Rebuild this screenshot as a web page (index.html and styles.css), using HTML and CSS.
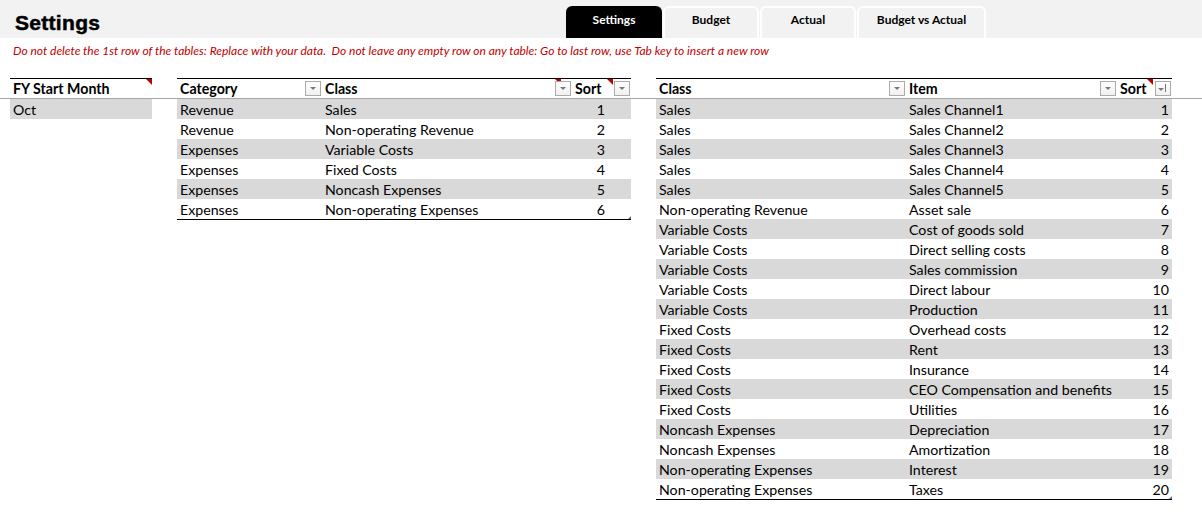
FILE: index.html
```html
<!DOCTYPE html>
<html lang="en">
<head>
  <meta charset="UTF-8" />
  <title>Settings</title>
  <link rel="stylesheet" href="styles.css">
</head>
<body>
  <header class="topbar">
    <h1 class="title">Settings</h1>
    <nav class="tabs">
      <a class="tab active" href="#">Settings</a>
      <a class="tab" href="#">Budget</a>
      <a class="tab" href="#">Actual</a>
      <a class="tab wide" href="#">Budget vs Actual</a>
    </nav>
  </header>

  <p class="note">Do not delete the 1st row of the tables: Replace with your data.&nbsp; Do not leave any empty row on any table: Go to last row, use Tab key to insert a new row</p>

  <main class="sheets">
    <table class="tbl t-fy">
      <colgroup><col style="width:142px"></colgroup>
      <thead>
        <tr><th>FY Start Month<span class="flag"></span></th></tr>
      </thead>
      <tbody>
        <tr><td>Oct</td></tr>
      </tbody>
    </table>

    <table class="tbl t-cat">
      <colgroup><col style="width:145px"><col style="width:250px"><col style="width:59px"></colgroup>
      <thead>
        <tr>
          <th>Category<span class="drop"></span></th>
          <th>Class<span class="flag f-class"></span><span class="drop"></span></th>
          <th>Sort<span class="flag f-sort"></span><span class="drop"></span></th>
        </tr>
      </thead>
      <tbody id="cat-rows"></tbody>
    </table>

    <table class="tbl t-item">
      <colgroup><col style="width:250px"><col style="width:211px"><col style="width:55px"></colgroup>
      <thead>
        <tr>
          <th>Class<span class="drop"></span></th>
          <th>Item<span class="drop"></span></th>
          <th>Sort<span class="flag f-sort2"></span><span class="drop sorted"></span></th>
        </tr>
      </thead>
      <tbody id="item-rows"></tbody>
    </table>
  </main>

  <script>
    const categories = [
      ["Revenue", "Sales"],
      ["Revenue", "Non-operating Revenue"],
      ["Expenses", "Variable Costs"],
      ["Expenses", "Fixed Costs"],
      ["Expenses", "Noncash Expenses"],
      ["Expenses", "Non-operating Expenses"]
    ];
    const items = [
      ["Sales", "Sales Channel1"],
      ["Sales", "Sales Channel2"],
      ["Sales", "Sales Channel3"],
      ["Sales", "Sales Channel4"],
      ["Sales", "Sales Channel5"],
      ["Non-operating Revenue", "Asset sale"],
      ["Variable Costs", "Cost of goods sold"],
      ["Variable Costs", "Direct selling costs"],
      ["Variable Costs", "Sales commission"],
      ["Variable Costs", "Direct labour"],
      ["Variable Costs", "Production"],
      ["Fixed Costs", "Overhead costs"],
      ["Fixed Costs", "Rent"],
      ["Fixed Costs", "Insurance"],
      ["Fixed Costs", "CEO Compensation and benefits"],
      ["Fixed Costs", "Utilities"],
      ["Noncash Expenses", "Depreciation"],
      ["Noncash Expenses", "Amortization"],
      ["Non-operating Expenses", "Interest"],
      ["Non-operating Expenses", "Taxes"]
    ];

    function fill(id, rows) {
      const body = document.getElementById(id);
      rows.forEach(([a, b], i) => {
        const tr = document.createElement("tr");
        tr.innerHTML = `<td>${a}</td><td>${b}</td><td class="num">${i + 1}</td>`;
        body.appendChild(tr);
      });
    }
    fill("cat-rows", categories);
    fill("item-rows", items);
  </script>
</body>
</html>
```

FILE: styles.css
```css
* {
  margin: 0;
  padding: 0;
  box-sizing: border-box;
}
body {
  background: #fff;
  color: #000;
  font-family: Lato, 'Open Sans', sans-serif;
  font-size: 14.2px;
}
.topbar {
  background: #f2f2f2;
  height: 38px;
  display: flex;
  align-items: flex-end;
}
.title {
  width: 566px;
  padding-left: 15px;
  align-self: center;
  font-family: 'Liberation Sans', Arial, sans-serif;
  font-weight: bold;
  font-size: 21px;
  letter-spacing: 0.3px;
  -webkit-text-stroke: 0.5px #000;
  padding-top: 7px;
}
.tabs {
  display: flex;
  gap: 1px;
}
.tab {
  width: 96px;
  height: 32px;
  display: flex;
  align-items: center;
  justify-content: center;
  padding-bottom: 7px;
  border: 2px solid #fff;
  border-bottom: none;
  border-radius: 6px 6px 0 0;
  background: #f2f2f2;
  color: #000;
  text-decoration: none;
  font-weight: bold;
  font-size: 12px;
}
.tab.active {
  background: #000;
  border-color: #000;
  color: #fff;
}
.tab.wide {
  width: 129px;
}
.note {
  color: #c00000;
  font-style: italic;
  font-size: 12px;
  padding: 5px 0 0 13px;
  height: 40px;
}
.sheets {
  display: flex;
  align-items: flex-start;
  gap: 25px;
  padding-left: 10px;
  background: linear-gradient(#a6a6a6, #a6a6a6) 0 20px / 100% 1px no-repeat;
}
.tbl {
  border-collapse: collapse;
  table-layout: fixed;
  border-top: 1px solid #000;
  border-bottom: 1px solid #000;
  position: relative;
}
.tbl::after {
  content: "";
  position: absolute;
  right: 0;
  bottom: 1px;
  border-left: 3px solid transparent;
  border-bottom: 3px solid #4f6c9a;
}
.t-fy {
  border-bottom: none;
}
.t-fy::after {
  display: none;
}
.tbl th,
.tbl td {
  height: 20px;
  padding: 1px 3px 0;
  text-align: left;
  white-space: nowrap;
  line-height: 19px;
}
.tbl th {
  padding-top: 0;
  font-weight: bold;
  position: relative;
  border-bottom: 1px solid #a6a6a6;
}
.tbl tbody tr:nth-child(odd) td {
  background: #d9d9d9;
}
.tbl td.num {
  text-align: right;
}
.t-cat td.num {
  padding-right: 26px;
}
.drop {
  position: absolute;
  right: 1px;
  top: 2px;
  width: 16px;
  height: 15px;
  border: 1px solid #ababab;
  background: linear-gradient(#fff, #f0f0f0);
}
.drop::before {
  content: "";
  position: absolute;
  left: 4px;
  top: 5px;
  border-left: 3px solid transparent;
  border-right: 3px solid transparent;
  border-top: 3px solid #7a7a7a;
}
.drop.sorted::before {
  left: 2px;
  top: 6px;
}
.drop.sorted::after {
  content: "";
  position: absolute;
  left: 9px;
  top: 2px;
  width: 1px;
  height: 8px;
  background: #7a7a7a;
}
.flag {
  position: absolute;
  top: 0;
  right: 0;
  border-left: 6px solid transparent;
  border-top: 6px solid #c00000;
}
.flag.f-class {
  right: 11px;
}
.flag.f-sort {
  right: 18px;
}
.flag.f-sort2 {
  right: 19px;
}
```
